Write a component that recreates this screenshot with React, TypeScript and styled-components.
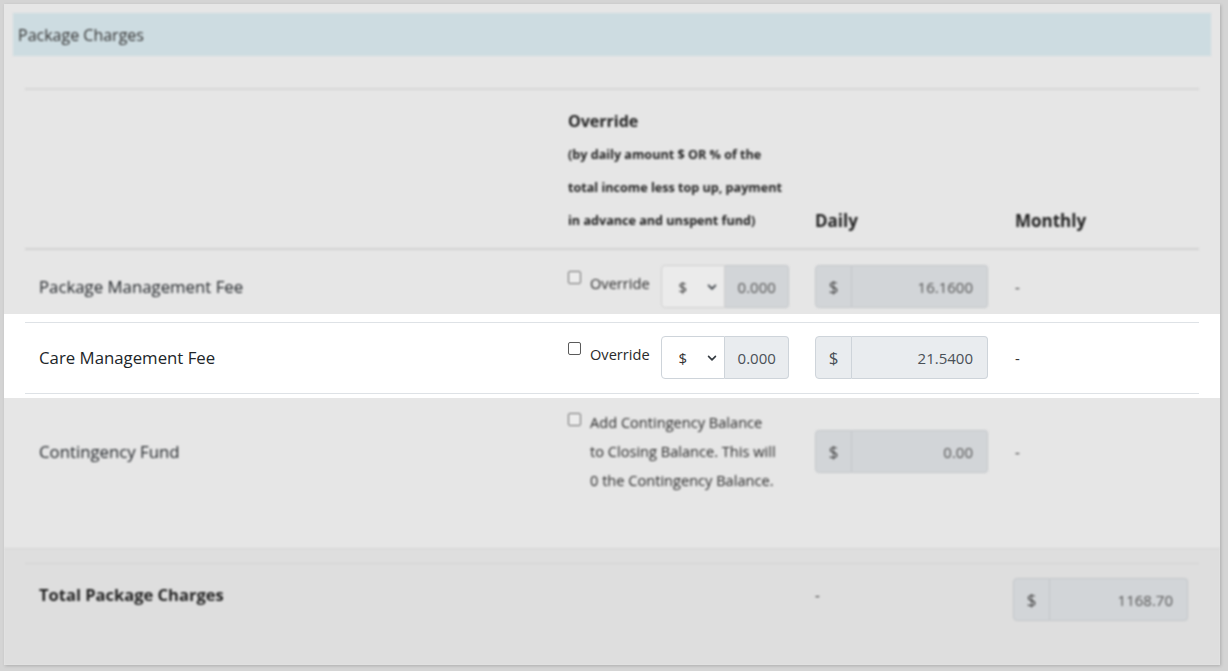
import styled, { createGlobalStyle } from "styled-components";

const GlobalStyle = createGlobalStyle`
  html, body {
    margin: 0;
    padding: 0;
  }
  body {
    background: #d4d4d4;
    font-family: "Open Sans", "Liberation Sans", sans-serif;
    color: #212529;
  }
`;

const Page = styled.div`
  width: 1228px;
  height: 671px;
  box-sizing: border-box;
  padding: 4px 8px 6px 4px;
`;

const Card = styled.div`
  height: 661px;
  display: flex;
  flex-direction: column;
  background: #e6e6e6;
  box-shadow: 1px 1px 3px rgba(0, 0, 0, 0.18);
  overflow: hidden;
`;

const Blur = styled.div`
  filter: blur(0.9px);
`;

const TitleBar = styled.div`
  margin: 9px 9px 0;
  height: 43px;
  display: flex;
  align-items: center;
  padding-left: 5px;
  background: #cddce1;
  font-size: 16px;
  color: #333;
`;

const Body = styled.div`
  flex: 1;
  padding-top: 32px;
`;

const Band = styled.div<{ $lit?: boolean }>`
  padding: ${({ $lit }) => ($lit ? "8px 21px 4px" : "0 21px")};
  background: ${({ $lit }) => ($lit ? "#ffffff" : "transparent")};
  filter: ${({ $lit }) => ($lit ? "none" : "blur(0.9px)")};
`;

const Grid = styled.div<{
  $align?: string;
  $pad?: string;
  $top?: string;
  $bottom?: string;
}>`
  display: grid;
  grid-template-columns: 530px 247px 200px 1fr;
  align-items: ${({ $align }) => $align || "center"};
  padding: ${({ $pad }) => $pad || "0"};
  border-top: ${({ $top }) => $top || "none"};
  border-bottom: ${({ $bottom }) => $bottom || "none"};
`;

const Cell = styled.div<{ $first?: boolean }>`
  padding-left: ${({ $first }) => ($first ? "14px" : "13px")};
`;

const HeadTitle = styled.div`
  font-size: 16px;
  font-weight: 700;
  line-height: 34px;
  color: #222;
`;

const HeadNote = styled.div`
  font-size: 12.6px;
  font-weight: 700;
  line-height: 33px;
  color: #222;
  white-space: nowrap;
`;

const ColHead = styled.div`
  font-size: 17px;
  font-weight: 700;
  line-height: 33px;
  color: #222;
`;

const Label = styled.div<{ $bold?: boolean }>`
  font-size: ${({ $bold }) => ($bold ? 16.5 : 16.8)}px;
  line-height: 24px;
  font-weight: ${({ $bold }) => ($bold ? 700 : 400)};
  color: ${({ $bold }) => ($bold ? "#1f1f1f" : "#212529")};
`;

const Dash = styled.div`
  font-size: 15px;
  line-height: 24px;
  color: #333;
`;

const OverrideBox = styled.div`
  display: flex;
  align-items: flex-start;
`;

const Check = styled.span<{ $lit?: boolean; $top?: number }>`
  flex: none;
  width: 11px;
  height: 11px;
  margin-top: ${({ $top }) => $top ?? 6}px;
  border: 1px solid ${({ $lit }) => ($lit ? "#5a5a5a" : "#6a6a6a")};
  border-radius: 2px;
  background: ${({ $lit }) => ($lit ? "#fff" : "#ececec")};
`;

const CheckText = styled.div<{ $lh?: number }>`
  margin-left: 9px;
  font-size: 14.6px;
  line-height: ${({ $lh }) => $lh ?? 24}px;
  margin-top: ${({ $lh }) => ($lh ? 0 : 6)}px;
  color: #2a2a2a;
  white-space: nowrap;
`;

const Select = styled.div<{ $lit?: boolean }>`
  margin-left: 11px;
  width: 64px;
  height: 43px;
  box-sizing: border-box;
  display: flex;
  align-items: center;
  justify-content: space-between;
  padding: 0 7px 0 17px;
  background: ${({ $lit }) => ($lit ? "#fff" : "#ebebeb")};
  border: 1px solid ${({ $lit }) => ($lit ? "#ced4da" : "#cfcfcf")};
  border-radius: 4px 0 0 4px;
  font-size: 15px;
  color: #333;
`;

const AmountField = styled.div<{ $lit?: boolean }>`
  width: 64px;
  height: 43px;
  box-sizing: border-box;
  display: flex;
  align-items: center;
  padding-left: 13px;
  background: ${({ $lit }) => ($lit ? "#e9ecef" : "#d2d5d8")};
  border: 1px solid ${({ $lit }) => ($lit ? "#ced4da" : "#c4c7ca")};
  border-left: none;
  border-radius: 0 4px 4px 0;
  font-size: 15px;
  color: ${({ $lit }) => ($lit ? "#495057" : "#555")};
`;

const Group = styled.div<{ $w: number }>`
  display: flex;
  width: ${({ $w }) => $w}px;
  height: 43px;
`;

const Addon = styled.div<{ $lit?: boolean }>`
  flex: none;
  width: 37px;
  box-sizing: border-box;
  display: flex;
  align-items: center;
  justify-content: center;
  background: ${({ $lit }) => ($lit ? "#e9ecef" : "#d2d5d8")};
  border: 1px solid ${({ $lit }) => ($lit ? "#ced4da" : "#c4c7ca")};
  border-radius: 4px 0 0 4px;
  font-size: 17px;
  color: ${({ $lit }) => ($lit ? "#495057" : "#444")};
`;

const Value = styled.div<{ $lit?: boolean }>`
  flex: 1;
  box-sizing: border-box;
  display: flex;
  align-items: center;
  justify-content: flex-end;
  padding-right: 14px;
  background: ${({ $lit }) => ($lit ? "#e9ecef" : "#d2d5d8")};
  border: 1px solid ${({ $lit }) => ($lit ? "#ced4da" : "#c4c7ca")};
  border-left: none;
  border-radius: 0 4px 4px 0;
  font-size: 15px;
  color: ${({ $lit }) => ($lit ? "#495057" : "#555")};
`;

const Footer = styled.div`
  height: 117px;
  box-sizing: border-box;
  padding: 14px 21px 0;
  background: #dedede;
  border-top: 1px solid #d6d6d6;
  filter: blur(0.9px);
`;

const Chevron = () => (
  <svg width="10" height="10" viewBox="0 0 16 16" fill="none">
    <path
      d="M2.5 5.5 8 11l5.5-5.5"
      stroke="#343a40"
      strokeWidth="2.6"
      strokeLinecap="round"
      strokeLinejoin="round"
    />
  </svg>
);

function MoneyInput({ value, lit, width = 173 }: { value: string; lit?: boolean; width?: number }) {
  return (
    <Group $w={width}>
      <Addon $lit={lit}>$</Addon>
      <Value $lit={lit}>{value}</Value>
    </Group>
  );
}

function FeeRow({ label, daily, lit }: { label: string; daily: string; lit?: boolean }) {
  return (
    <>
      <Cell $first>
        <Label>{label}</Label>
      </Cell>
      <Cell>
        <OverrideBox>
          <Check $lit={lit} />
          <CheckText>Override</CheckText>
          <Select $lit={lit}>
            <span>$</span>
            <Chevron />
          </Select>
          <AmountField $lit={lit}>0.000</AmountField>
        </OverrideBox>
      </Cell>
      <Cell>
        <MoneyInput value={daily} lit={lit} />
      </Cell>
      <Cell>
        <Dash>-</Dash>
      </Cell>
    </>
  );
}

export default function App() {
  return (
    <>
      <GlobalStyle />
      <Page>
        <Card>
          <Blur>
            <TitleBar>Package Charges</TitleBar>
          </Blur>
          <Body>
            <Band>
              <Grid
                $align="end"
                $pad="14px 0 11px"
                $top="2px solid #d6d6d6"
                $bottom="2px solid #d2d2d2"
              >
                <Cell $first />
                <Cell>
                  <HeadTitle>Override</HeadTitle>
                  <HeadNote>(by daily amount $ OR % of the</HeadNote>
                  <HeadNote>total income less top up, payment</HeadNote>
                  <HeadNote>in advance and unspent fund)</HeadNote>
                </Cell>
                <Cell>
                  <ColHead>Daily</ColHead>
                </Cell>
                <Cell>
                  <ColHead>Monthly</ColHead>
                </Cell>
              </Grid>
            </Band>
            <Band>
              <Grid $pad="15px 0 6px">
                <FeeRow label="Package Management Fee" daily="16.1600" />
              </Grid>
            </Band>
            <Band $lit>
              <Grid $pad="13px 0 14px" $top="1px solid #dee2e6" $bottom="1px solid #dee2e6">
                <FeeRow label="Care Management Fee" daily="21.5400" lit />
              </Grid>
            </Band>
            <Band>
              <Grid $pad="10px 0 0">
                <Cell $first>
                  <Label>Contingency Fund</Label>
                </Cell>
                <Cell>
                  <OverrideBox>
                    <Check $top={5} />
                    <CheckText $lh={29}>
                      Add Contingency Balance
                      <br />
                      to Closing Balance. This will
                      <br />0 the Contingency Balance.
                    </CheckText>
                  </OverrideBox>
                </Cell>
                <Cell>
                  <MoneyInput value="0.00" />
                </Cell>
                <Cell>
                  <Dash>-</Dash>
                </Cell>
              </Grid>
            </Band>
          </Body>
          <Footer>
            <Grid $align="start" $pad="14px 0 0" $top="1px solid #d2d2d2">
              <Cell $first>
                <Label $bold style={{ marginTop: 5 }}>
                  Total Package Charges
                </Label>
              </Cell>
              <Cell />
              <Cell>
                <Dash style={{ marginTop: 5 }}>-</Dash>
              </Cell>
              <Cell style={{ paddingLeft: 11 }}>
                <MoneyInput value="1168.70" width={175} />
              </Cell>
            </Grid>
          </Footer>
        </Card>
      </Page>
    </>
  );
}
